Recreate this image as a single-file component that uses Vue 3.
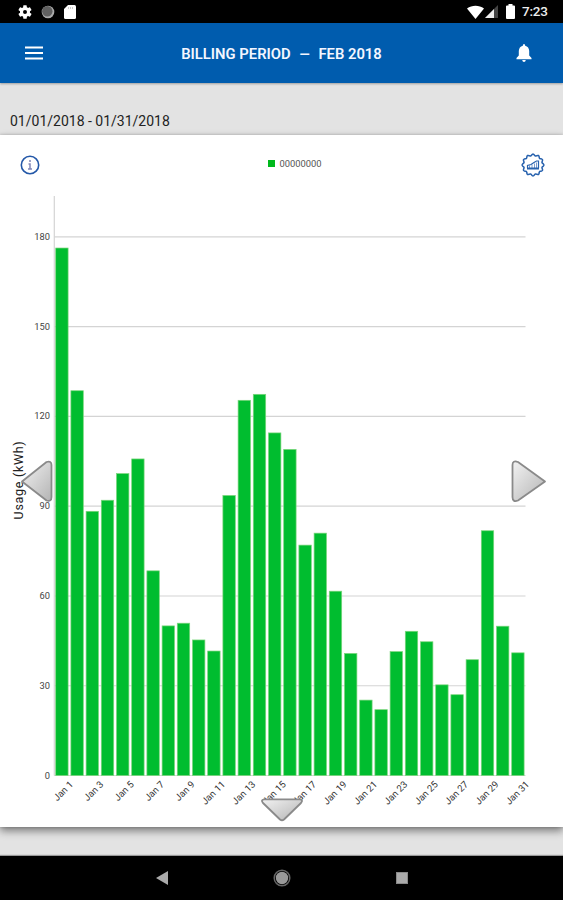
<!--
 * Billing period
 * -------------
 * Daily usage chart for one billing period
-->
<template>
    <div class="screen">
        <div class="status-bar">
            <div class="status-left">
                <svg width="16" height="16" viewBox="0 0 24 24">
                    <path fill="#fff" fill-rule="evenodd" d="M19.4 13c.04-.33.06-.66.06-1s-.02-.67-.06-1l2.1-1.65c.2-.15.25-.42.13-.64l-2-3.46c-.13-.22-.39-.3-.61-.22l-2.5 1c-.52-.4-1.08-.73-1.7-.98l-.37-2.65A.5.5 0 0 0 14 2h-4a.5.5 0 0 0-.5.42l-.37 2.65c-.61.25-1.17.59-1.69.98l-2.49-1c-.23-.09-.49 0-.61.22l-2 3.46c-.13.22-.07.49.12.64L4.57 11c-.04.33-.07.66-.07 1s.03.67.07 1l-2.11 1.65c-.19.15-.24.42-.12.64l2 3.46c.12.22.38.3.61.22l2.49-1c.52.4 1.08.73 1.69.98l.38 2.65c.03.24.24.4.49.4h4c.25 0 .46-.16.5-.4l.37-2.65c.61-.25 1.17-.59 1.7-.98l2.48 1c.23.09.49 0 .61-.22l2-3.46c.12-.22.07-.49-.12-.64zM12 15a3 3 0 1 1 0-6 3 3 0 0 1 0 6z"/>
                </svg>
                <svg width="14" height="14" viewBox="0 0 14 14">
                    <circle cx="7" cy="7" r="6.300" fill="#aaa"/>
                    <circle cx="6.300" cy="6.300" r="5.200" fill="#606060"/>
                </svg>
                <svg width="14" height="16" viewBox="0 0 14 16">
                    <path fill="#fff" d="M5 1h6.500a1.500 1.500 0 0 1 1.500 1.500v11a1.500 1.500 0 0 1-1.500 1.500h-9a1.500 1.500 0 0 1-1.500-1.500V5z"/>
                    <path stroke="#ccc" d="M5.500 3v2M7.500 3v2M9.500 3v2"/>
                </svg>
            </div>
            <div class="status-right">
                <svg width="17" height="14" viewBox="0 0 17 14">
                    <path fill="#fff" d="M0 3.500C5 -.3 12 -.3 17 3.500L8.500 14z"/>
                </svg>
                <svg class="signal" width="14" height="14" viewBox="0 0 14 14">
                    <path fill="#444" d="M13 0v13H0z"/>
                    <path fill="#eee" d="M9 4v9H0z"/>
                </svg>
                <svg class="battery" width="9" height="15" viewBox="0 0 9 15">
                    <path fill="#fff" d="M2.500 0h4v1.500H8q1 0 1 1V14q0 1-1 1H1q-1 0-1-1V2.500q0-1 1-1h1.500z"/>
                </svg>
                <span class="clock">7:23</span>
            </div>
        </div>

        <header class="header">
            <svg width="18" height="14" viewBox="0 0 18 14">
                <path stroke="#fff" stroke-width="2" d="M0 1.500h18M0 7h18M0 12.500h18"/>
            </svg>
            <h1>BILLING PERIOD <span class="dash">—</span> FEB 2018</h1>
            <svg width="16" height="18" viewBox="0 0 16 18">
                <path fill="#fff" d="M8 0q1.200 0 1.200 1.700Q13 2.800 13.200 7v4.500L15.500 14v1.200H.5V14l2.300-2.500V7Q3 2.800 6.800 1.700 6.800 0 8 0zM6.200 16h3.600Q9.500 18 8 18t-1.800-2z"/>
            </svg>
        </header>

        <div class="period">01/01/2018 - 01/31/2018</div>

        <main class="card">
            <div class="card-top">
                <svg width="20" height="20" viewBox="0 0 20 20">
                    <circle cx="10" cy="10" r="8.700" fill="none" stroke="#2458a8" stroke-width="1.600"/>
                    <path fill="none" stroke="#8186b8" stroke-width="1.500" d="M10 5v2M8.500 9H10v4.500M8 14h4"/>
                </svg>
                <div class="legend"><i></i><span>00000000</span></div>
                <svg width="24" height="24" viewBox="0 0 24 24">
                    <path :d="badgePath" fill="none" stroke="#2862ae" stroke-width="1.500"/>
                    <path fill="none" stroke="#7d9ccc" stroke-width="1" d="M8.500 15v-2.500M11 15v-3.500M13.500 15v-4.500M15.500 15v-5.500"/>
                    <path fill="none" stroke="#2862ae" stroke-width="1.200" d="M6.500 15v-2.500L10 11.500 13 9.500 15.500 8H17.500V15"/>
                    <path stroke="#2862ae" stroke-width="2" d="M6 15.500h12"/>
                </svg>
            </div>

            <svg class="chart" width="563" height="638" viewBox="0 0 563 638">
                <defs>
                    <linearGradient id="arrowFill" x1="0" y1="0" x2="1" y2="1">
                        <stop offset="0" stop-color="#f2f2f2"/>
                        <stop offset="1" stop-color="#b4b4b4"/>
                    </linearGradient>
                </defs>
                <!-- Grid -->
                <g v-for="tick in ticks" :key="tick">
                    <line x1="54" x2="525.500" :y1="yOf(tick)" :y2="yOf(tick)" stroke="#d4d4d4" stroke-width="1.200"/>
                    <text class="tick" x="50" :y="yOf(tick)+3" text-anchor="end">{{ tick }}</text>
                </g>
                <line x1="54.300" x2="54.300" y1="7" :y2="baseY" stroke="#d4d4d4" stroke-width="1.200"/>
                <!-- Bars -->
                <rect v-for="bar in bars" :key="bar.day" :x="bar.x" :y="bar.y" width="12.400" :height="bar.height" fill="#00bd2f" stroke="#7cd67c" stroke-width="0.700"/>
                <!-- Only the odd days carry a label -->
                <text v-for="bar in labelled" :key="bar.day" class="day" text-anchor="end" :transform="`translate(${bar.x+18} 596) rotate(-45)`">Jan {{ bar.day }}</text>
                <text class="axis" text-anchor="middle" transform="translate(22.500 291) rotate(-90)">Usage (kWh)</text>
                <!-- Navigation arrows -->
                <g class="arrow">
                    <path d="M22 292.500L46.500 273Q51.500 271.500 51.500 276V308Q51.500 313 46.500 311.500z"/>
                    <path d="M545 292.500L518 273Q512.500 271 512.500 276V308Q512.500 313.500 518 311.500z"/>
                    <path d="M264 610.300H300Q303.500 611 301 614L284 630.500Q282 632 280 630.500L263 614Q260.500 611 264 610.300z"/>
                </g>
            </svg>
        </main>

        <div class="gap"></div>

        <nav class="nav-bar">
            <svg width="12" height="14" viewBox="0 0 12 14"><path fill="#aaa" d="M12 0v14L0 7z"/></svg>
            <svg width="18" height="18" viewBox="0 0 18 18">
                <circle cx="9" cy="9" r="7.800" fill="none" stroke="#666" stroke-width="1.500"/>
                <circle cx="9" cy="9" r="6.200" fill="#999"/>
            </svg>
            <svg width="12" height="12" viewBox="0 0 12 12"><rect x=".5" y=".5" width="11" height="11" fill="#aaa" stroke="#888"/></svg>
        </nav>
    </div>
</template>

<script setup>
    import { computed } from 'vue';

    // kWh per day
    const usage = [
        176.3, 128.6, 88.3, 92, 100.9, 105.8, 68.4, 50, 50.9, 45.3, 41.6,
        93.6, 125.4, 127.4, 114.5, 109, 77, 81, 61.6, 40.8, 25.2,
        22, 41.4, 48.2, 44.7, 30.3, 27, 38.7, 81.8, 49.9, 41
    ];
    const ticks = [0, 30, 60, 90, 120, 150, 180];
    const baseY = 586.5;

    const yOf = (value) => baseY-value*2.992;

    const bars = computed(() => usage.map((value, i) => ({
        day: i+1,
        x: 55.7+i*15.2,
        y: yOf(value),
        height: value*2.992
    })));

    const labelled = computed(() => bars.value.filter((bar) => bar.day % 2 === 1));

    // Scalloped outline of the badge
    const badgePath = Array.from({length: 97}, (_, i) => {
        const angle = i*Math.PI/48;
        const r = 10.1+0.8*Math.cos(angle*12);
        return `${i ? 'L' : 'M'}${(12+r*Math.cos(angle)).toFixed(2)} ${(12+r*Math.sin(angle)).toFixed(2)}`;
    }).join('')+'z';
</script>

<style>
body {
  margin: 0;
}
</style>

<style scoped>
.screen {
  display: flex;
  flex-direction: column;
  width: 563px;
  height: 900px;
  overflow: hidden;
  background: #e3e3e3;
  font-family: Roboto, "Liberation Sans", sans-serif;
}

svg {
  display: block;
  flex: none;
}

.status-bar {
  display: flex;
  justify-content: space-between;
  height: 23px;
  padding: 0 15px 0 17px;
  background: #000;
}

.status-left,
.status-right {
  display: flex;
  align-items: center;
}

.status-left {
  gap: 8px;
}

.signal {
  margin-left: 1px;
}

.battery {
  margin-left: 7px;
}

.clock {
  width: 26px;
  margin-left: 7px;
  color: #eee;
  font-size: 13.5px;
  font-weight: 500;
  letter-spacing: -0.2px;
  line-height: 25px;
  white-space: nowrap;
}

.header {
  display: flex;
  align-items: center;
  justify-content: space-between;
  box-sizing: border-box;
  height: 60px;
  padding: 0 31px 0 25px;
  background: #005cae;
  box-shadow: 0 1px 2px rgba(0, 0, 0, 0.3);
  z-index: 1;
}

h1 {
  margin: 1px 0 0 4px;
  color: #f3f6ff;
  font-size: 14.8px;
  font-weight: 600;
  line-height: 20px;
  white-space: nowrap;
}

.dash {
  display: inline-block;
  margin: 0 4.5px;
  transform: scaleX(0.9);
}

.period {
  box-sizing: border-box;
  height: 52px;
  padding: 29px 0 0 10px;
  color: #222;
  font-size: 14px;
  line-height: 18px;
}

.card {
  height: 692px;
  background: #fff;
  box-shadow: 0 4px 8px rgba(0, 0, 0, 0.45), 0 0 3px rgba(0, 0, 0, 0.2);
}

.card-top {
  display: flex;
  align-items: center;
  justify-content: space-between;
  box-sizing: border-box;
  height: 54px;
  padding: 5px 18px 0 20px;
}

.legend {
  display: flex;
  align-items: center;
  gap: 4px;
  color: #555;
  font-size: 9.4px;
  margin: -2px 0 0 29px;
}

.legend i {
  width: 7px;
  height: 7px;
  background: #00b81c;
}

.tick {
  fill: #444;
  font-size: 9.3px;
}

.day {
  fill: #333;
  font-size: 9.5px;
}

.axis {
  fill: #222;
  font-size: 12.5px;
  letter-spacing: 0.7px;
}

.arrow path {
  fill: url(#arrowFill);
  stroke: #8a8a8a;
  stroke-width: 1.8;
  stroke-linejoin: round;
}

.gap {
  height: 29px;
}

.nav-bar {
  display: flex;
  align-items: center;
  justify-content: space-between;
  box-sizing: border-box;
  height: 44px;
  padding: 0 155px 0 156px;
  background: #000;
  box-shadow: 0 -1px 1px #999;
}
</style>
